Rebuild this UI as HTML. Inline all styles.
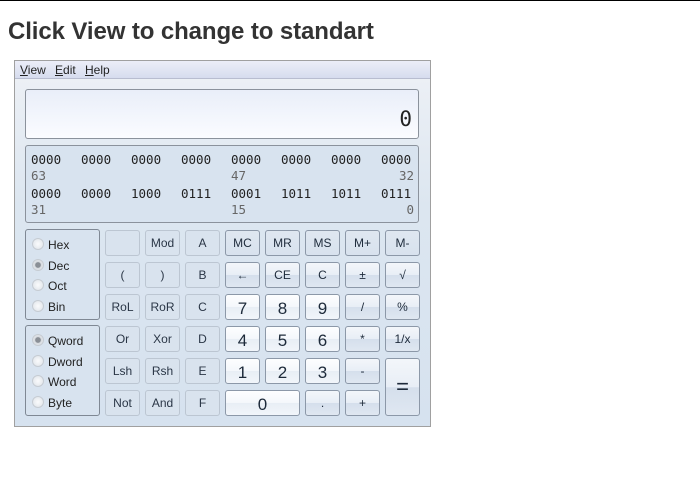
<!DOCTYPE html>
<html><head><style>
body{margin:0;width:700px;height:500px;background:#fff;position:relative;overflow:hidden;font-family:"Liberation Sans",sans-serif}
.top{position:absolute;left:0;top:0;width:700px;height:1px;background:#000}
h1{position:absolute;left:8px;top:18px;margin:0;font-size:24px;font-weight:bold;color:#333;letter-spacing:-0.1px}
.calc{position:absolute;left:14px;top:60px;width:415px;height:365px;border:1px solid #a0a0a0;background:linear-gradient(#eef1f6,#dce6f0 40%,#d6e2ef);}
.menu{position:absolute;left:0;top:0;width:415px;height:17px;background:linear-gradient(#eceef8,#d6dcee);border-bottom:1px solid #b8bdd0;font-size:12px;color:#222}
.menu span{position:absolute;top:2px}
.menu u{text-decoration:underline}
.disp{position:absolute;left:10px;top:28px;width:392px;height:48px;border:1px solid #8b929c;border-radius:3px;background:linear-gradient(#e9eef9,#fbfcff)}
.disp span{position:absolute;right:6px;top:17px;font-family:"DejaVu Sans Mono",monospace;font-size:21px;color:#222}
.bin{position:absolute;left:10px;top:84px;width:392px;height:76px;border:1px solid #8b929c;border-radius:3px;background:#d8e3ef;font-family:"DejaVu Sans Mono",monospace;font-size:12.5px}
.bin div{position:absolute;left:5px;width:383px;height:15px;line-height:15px}
.bin .d{color:#222}.bin .n{color:#666}
.bin span{position:absolute}
.grp{position:absolute;left:10px;width:73px;border:1px solid #7f8894;border-radius:3px;background:#d8e3ef}
.rad{position:absolute;left:6px;font-size:12px;color:#222}
.rad i{display:inline-block;width:10px;height:10px;border-radius:50%;border:1px solid #c6ccd3;background:radial-gradient(#fafbfc,#dde2e8);vertical-align:-1px;margin-right:4px}
.rad i.on{background:radial-gradient(#8a8f96 35%,#d6dadf 45%,#eef0f3)}
.b{position:absolute;width:33px;height:24px;border:1px solid #8c98a8;border-radius:3px;font-size:12px;color:#1d2a3a;text-align:center;line-height:24px;box-sizing:content-box}
.op{background:linear-gradient(#f3f6fa,#e8eef6 50%,#d5dfec 51%,#dfe7f1)}
.mem{background:linear-gradient(#dfe7f0,#d8e2ee)}
.dis{border-color:#bcc6d2;background:#d9e3ee;color:#2a3646}
.dg{background:linear-gradient(#fdfeff,#f4f7fb 50%,#e8eef5 51%,#f1f5fa);font-size:17px;line-height:27px}
</style></head><body>
<div class="top"></div>
<h1>Click View to change to standart</h1>
<div class="calc">
<div class="menu"><span style="left:5px"><u>V</u>iew</span><span style="left:40px"><u>E</u>dit</span><span style="left:70px"><u>H</u>elp</span></div>
<div class="disp"><span>0</span></div>
<div class="bin">
<div class="d" style="top:6px"><span style="left:0">0000</span><span style="left:50px">0000</span><span style="left:100px">0000</span><span style="left:150px">0000</span><span style="left:200px">0000</span><span style="left:250px">0000</span><span style="left:300px">0000</span><span style="left:350px">0000</span></div>
<div class="n" style="top:22px"><span style="left:0">63</span><span style="left:200px">47</span><span style="right:0">32</span></div>
<div class="d" style="top:40px"><span style="left:0">0000</span><span style="left:50px">0000</span><span style="left:100px">1000</span><span style="left:150px">0111</span><span style="left:200px">0001</span><span style="left:250px">1011</span><span style="left:300px">1011</span><span style="left:350px">0111</span></div>
<div class="n" style="top:56px"><span style="left:0">31</span><span style="left:200px">15</span><span style="right:0">0</span></div>
</div>
<div class="grp" style="top:168px;height:89px">
<div class="rad" style="top:8px"><i></i>Hex</div>
<div class="rad" style="top:29px"><i class="on"></i>Dec</div>
<div class="rad" style="top:49px"><i></i>Oct</div>
<div class="rad" style="top:70px"><i></i>Bin</div>
</div>
<div class="grp" style="top:264px;height:89px">
<div class="rad" style="top:8px"><i class="on"></i>Qword</div>
<div class="rad" style="top:29px"><i></i>Dword</div>
<div class="rad" style="top:49px"><i></i>Word</div>
<div class="rad" style="top:70px"><i></i>Byte</div>
</div>
<div class="b dis" style="left:90px;top:169px"></div>
<div class="b dis" style="left:130px;top:169px">Mod</div>
<div class="b dis" style="left:170px;top:169px">A</div>
<div class="b mem" style="left:210px;top:169px">MC</div>
<div class="b mem" style="left:250px;top:169px">MR</div>
<div class="b mem" style="left:290px;top:169px">MS</div>
<div class="b mem" style="left:330px;top:169px">M+</div>
<div class="b mem" style="left:370px;top:169px">M-</div>

<div class="b dis" style="left:90px;top:201px">(</div>
<div class="b dis" style="left:130px;top:201px">)</div>
<div class="b dis" style="left:170px;top:201px">B</div>
<div class="b op" style="left:210px;top:201px">←</div>
<div class="b op" style="left:250px;top:201px">CE</div>
<div class="b op" style="left:290px;top:201px">C</div>
<div class="b op" style="left:330px;top:201px">±</div>
<div class="b op" style="left:370px;top:201px">√</div>

<div class="b dis" style="left:90px;top:233px">RoL</div>
<div class="b dis" style="left:130px;top:233px">RoR</div>
<div class="b dis" style="left:170px;top:233px">C</div>
<div class="b dg" style="left:210px;top:233px">7</div>
<div class="b dg" style="left:250px;top:233px">8</div>
<div class="b dg" style="left:290px;top:233px">9</div>
<div class="b op" style="left:330px;top:233px">/</div>
<div class="b op" style="left:370px;top:233px">%</div>

<div class="b dis" style="left:90px;top:265px">Or</div>
<div class="b dis" style="left:130px;top:265px">Xor</div>
<div class="b dis" style="left:170px;top:265px">D</div>
<div class="b dg" style="left:210px;top:265px">4</div>
<div class="b dg" style="left:250px;top:265px">5</div>
<div class="b dg" style="left:290px;top:265px">6</div>
<div class="b op" style="left:330px;top:265px">*</div>
<div class="b op" style="left:370px;top:265px">1/x</div>

<div class="b dis" style="left:90px;top:297px">Lsh</div>
<div class="b dis" style="left:130px;top:297px">Rsh</div>
<div class="b dis" style="left:170px;top:297px">E</div>
<div class="b dg" style="left:210px;top:297px">1</div>
<div class="b dg" style="left:250px;top:297px">2</div>
<div class="b dg" style="left:290px;top:297px">3</div>
<div class="b op" style="left:330px;top:297px">-</div>
<div class="b op" style="left:370px;top:297px;height:56px;line-height:56px;font-size:22px">=</div>

<div class="b dis" style="left:90px;top:329px">Not</div>
<div class="b dis" style="left:130px;top:329px">And</div>
<div class="b dis" style="left:170px;top:329px">F</div>
<div class="b dg" style="left:210px;top:329px;width:73px">0</div>
<div class="b op" style="left:290px;top:329px">.</div>
<div class="b op" style="left:330px;top:329px">+</div>
</div>
</body></html>
